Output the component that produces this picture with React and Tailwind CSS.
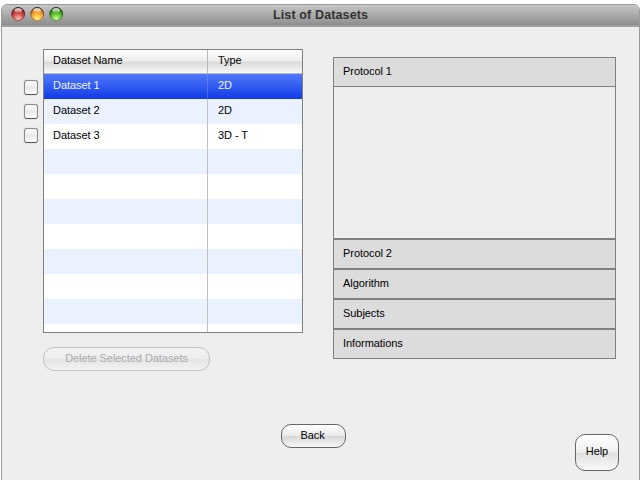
const datasets = [
  { name: 'Dataset 1', type: '2D' },
  { name: 'Dataset 2', type: '2D' },
  { name: 'Dataset 3', type: '3D - T' },
];
const rows = [...datasets, ...Array.from({ length: 7 }, () => ({ name: '', type: '' }))];

function TrafficLight({ id, dark, mid, light }) {
  return (
    <svg width="15" height="15" viewBox="0 0 15 15">
      <defs>
        <radialGradient id={id} cx="50%" cy="88%" r="80%">
          <stop offset="0" stopColor={light} />
          <stop offset="0.55" stopColor={mid} />
          <stop offset="1" stopColor={dark} />
        </radialGradient>
        <linearGradient id={id + '-shine'} x1="0" y1="0" x2="0" y2="1">
          <stop offset="0" stopColor="#fff" stopOpacity="0.95" />
          <stop offset="1" stopColor="#fff" stopOpacity="0.2" />
        </linearGradient>
        <linearGradient id={id + '-rim'} x1="0" y1="0" x2="0" y2="1">
          <stop offset="0" stopColor="#222" />
          <stop offset="1" stopColor={dark} stopOpacity="0.5" />
        </linearGradient>
      </defs>
      <circle cx="7.2" cy="7" r="6.5" fill={`url(#${id})`} stroke={`url(#${id}-rim)`} />
      <ellipse cx="7.2" cy="3.4" rx="3.8" ry="2.2" fill={`url(#${id}-shine)`} />
    </svg>
  );
}

function rowColor(i) {
  if (i === 0) return 'bg-linear-to-b from-[#5078fa] to-[#1238e4] text-[#f0f3ff]';
  return i % 2 ? 'bg-[#eaf2ff]' : 'bg-white';
}

function Section({ title, children }) {
  return (
    <>
      <div className="h-[30px] border border-[#808080] bg-[#dcdcdc] pl-[9px] leading-[27px]">{title}</div>
      {children}
    </>
  );
}

export default function App() {
  return (
    <div className="h-[480px] w-[640px] overflow-hidden bg-white pt-1 pl-px font-['Liberation_Sans',Arial,sans-serif] text-[11px] tracking-[-0.06px] text-black">
      <div className="h-[500px] w-[639px] rounded-t-[6px] border border-[#999] bg-[#eeeeee]">
        <div className="flex h-[22px] items-start rounded-t-[5px] border-b-2 border-[#a0a0a0] bg-linear-to-b from-[#c6c6c6] to-[#8e8e8e]">
          <div className="flex w-[270px] gap-1 pt-[2px] pl-[9px]">
            <TrafficLight id="close" dark="#8e1517" mid="#d2494b" light="#ffc0b8" />
            <TrafficLight id="minimize" dark="#b85d08" mid="#faa930" light="#fff98a" />
            <TrafficLight id="zoom" dark="#216d0a" mid="#5abd2d" light="#d0ff98" />
          </div>
          <h1 className="pl-px text-[12.5px] leading-[20px] font-bold tracking-[0.13px] whitespace-nowrap text-[#333333]">List of Datasets</h1>
        </div>

        <div className="flex items-start pt-[22px] pl-[22px]">
          <div className="flex w-[19px] flex-col gap-[9px] pt-[31px]">
            {datasets.map((d) => (
              <button
                key={d.name}
                aria-label={d.name}
                className="h-[15px] w-[14px] rounded-[3px] border border-[#8a8a8a] border-b-[#555] bg-linear-to-b from-white via-[#e9e9e9] to-white shadow-[0_0_1px_#999]"
              />
            ))}
          </div>

          <div className="flex w-[290px] flex-col items-start">
            <div className="h-[284px] w-[260px] overflow-hidden border border-[#808080] bg-white">
              <div className="flex h-6 border-b border-[#b5b8bc] bg-[linear-gradient(#fff_0%,#eeeeee_48%,#dadada_52%,#f8f8f8_100%)] leading-[21px]">
                <div className="w-[164px] border-r border-[#b7babc] pl-[9px]">Dataset Name</div>
                <div className="pl-[10px]">Type</div>
              </div>
              {rows.map((r, i) => (
                <div key={i} className={`flex h-[25px] leading-[22px] ${rowColor(i)}`}>
                  <div className={`w-[164px] border-r pl-[9px] ${i === 0 ? 'border-[#8ea3ee]/40' : 'border-[#c0c0c0]'}`}>{r.name}</div>
                  <div className="pl-[10px]">{r.type}</div>
                </div>
              ))}
              <div className="h-2 w-[164px] border-r border-[#c0c0c0]" />
            </div>
            <button className="mt-[14px] h-6 w-[167px] rounded-[11px] border border-[#c2c2c2] bg-[linear-gradient(#f4f4f4_0%,#ececec_48%,#e5e5e5_52%,#f2f2f2_100%)] pb-px leading-[21px] text-[#aaa]">
              Delete Selected Datasets
            </button>
          </div>

          <div className="mt-2 w-[283px]">
            <Section title="Protocol 1">
              <div className="h-[152px] border-x border-b border-[#808080] bg-[#eee]" />
            </Section>
            <Section title="Protocol 2" />
            <Section title="Algorithm" />
            <Section title="Subjects" />
            <Section title="Informations" />
          </div>
        </div>

        <div className="flex items-start pt-[53px] pl-[279px]">
          <button className="h-6 w-[65px] rounded-[10px] border border-[#666] bg-[linear-gradient(#fff_0%,#eaeaea_48%,#d8d8d8_52%,#f6f6f6_100%)] pr-[3px] pb-px pl-px leading-[21px]">
            Back
          </button>
          <button className="mt-[10px] ml-[229px] h-[37px] w-[44px] rounded-[10px] border border-[#666] bg-[linear-gradient(#fff_0%,#f0f0f0_48%,#e0e0e0_52%,#fafafa_100%)] pb-[3px] leading-[32px]">
            Help
          </button>
        </div>
      </div>
    </div>
  );
}
